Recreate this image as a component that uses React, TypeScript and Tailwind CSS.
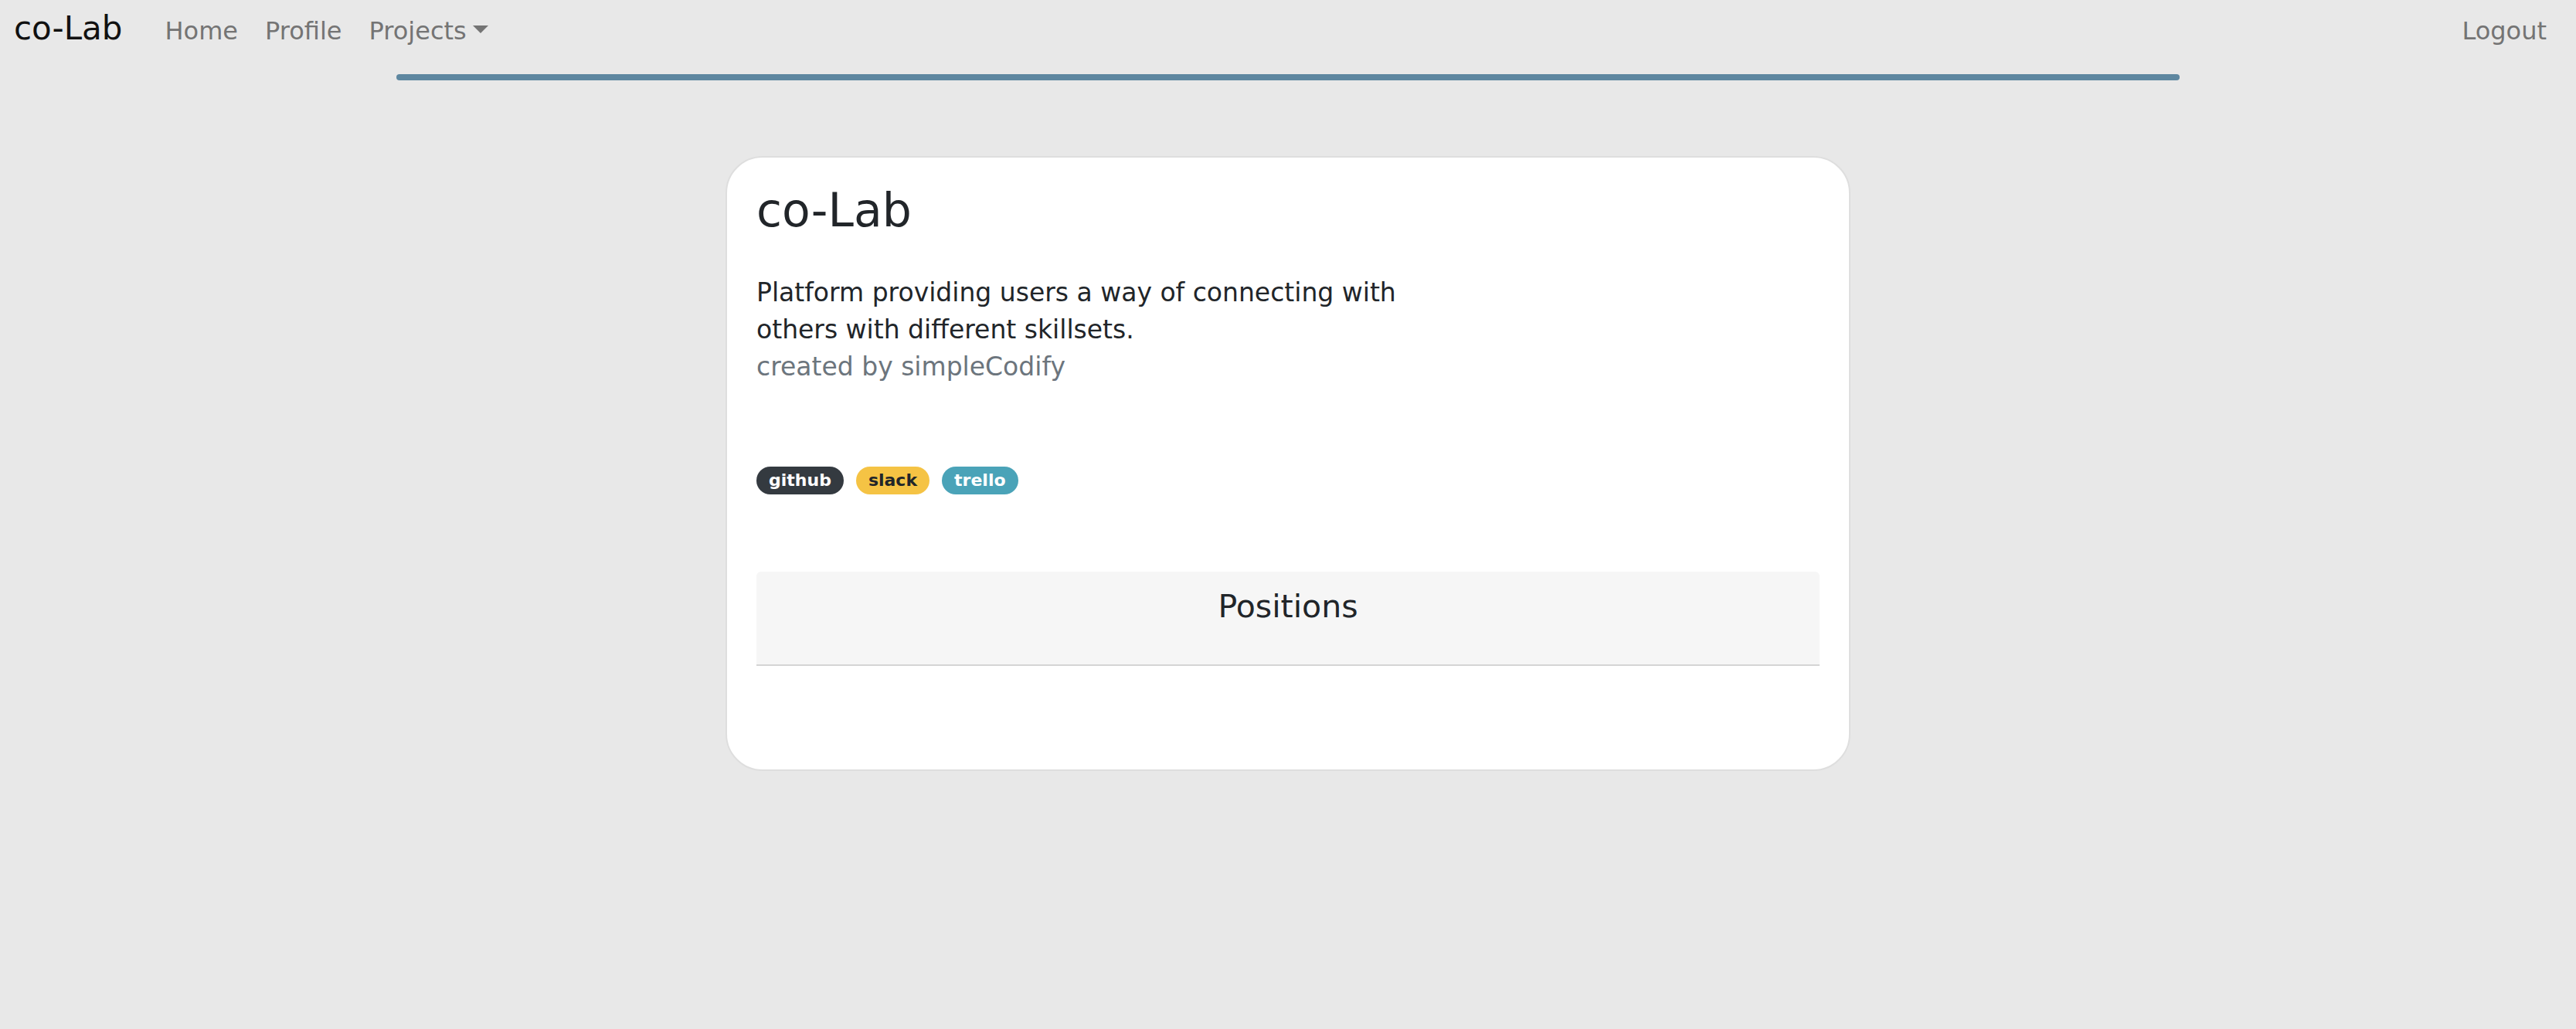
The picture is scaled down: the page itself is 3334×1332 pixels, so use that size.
// Project detail page for co-Lab
// Fixed sizes follow the 2x zoomed Bootstrap-style layout of the reference

const NAV_LINKS = ['Home', 'Profile'];

const TOOLS: { name: string; className: string }[] = [
  { name: 'github', className: 'bg-[#343a40] text-white' },
  { name: 'slack', className: 'bg-[#f5c344] text-[#212529]' },
  { name: 'trello', className: 'bg-[#4aa3b8] text-white' },
];

export default function App() {
  return (
    <div className="min-h-screen bg-[#e8e8e8] font-['DejaVu_Sans',sans-serif] text-[#212529]">
      {/* NAVBAR */}
      <nav className="flex items-baseline pl-[18px] pr-[38px] pt-[12px]">
        <a href="#" className="mr-[55px] text-[42px] leading-[50px] text-[#111]">
          co-Lab
        </a>
        <div className="flex items-baseline gap-[35px] text-[32px] leading-[48px] text-[#747474]">
          {NAV_LINKS.map((l) => (
            <a key={l} href="#">
              {l}
            </a>
          ))}
          <a href="#" className="whitespace-nowrap">
            Projects
            <span className="ml-[8px] inline-block h-0 w-0 border-x-[10px] border-t-[10px] border-x-transparent border-t-current align-[0.255em]" />
          </a>
        </div>
        <a href="#" className="ml-auto text-[32px] leading-[48px] text-[#747474]">
          Logout
        </a>
      </nav>

      {/* divider bar */}
      <div className="mx-auto mt-[32px] h-[8px] w-[2308px] rounded-full bg-[#5e87a0]" />

      {/* PROJECT CARD */}
      <main className="mx-auto mt-[98px] w-[1456px] rounded-[48px] border-2 border-[#dedede] bg-white px-[38px] pb-[134px] pt-[32px]">
        <h3 className="text-[60px] leading-[72px]">co-Lab</h3>

        <div className="mt-[47px] w-[880px] text-[33px] leading-[48px]">
          <p>Platform providing users a way of connecting with others with different skillsets.</p>
          <p className="text-[#6c757d]">created by simpleCodify</p>
        </div>

        <div className="mt-[105px] flex gap-[16px]">
          {TOOLS.map((t) => (
            <span
              key={t.name}
              className={[
                'flex h-[36px] items-center rounded-full px-[16px] text-[22px] font-bold leading-none',
                t.className,
              ].join(' ')}
            >
              {t.name}
            </span>
          ))}
        </div>

        {/* Positions */}
        <section className="mt-[100px] h-[122px] rounded-t-[6px] border-b-2 border-[#d5d5d5] bg-[#f6f6f6] pt-[21px] text-center">
          <h4 className="text-[41px] leading-[48px]">Positions</h4>
        </section>
      </main>
    </div>
  );
}
